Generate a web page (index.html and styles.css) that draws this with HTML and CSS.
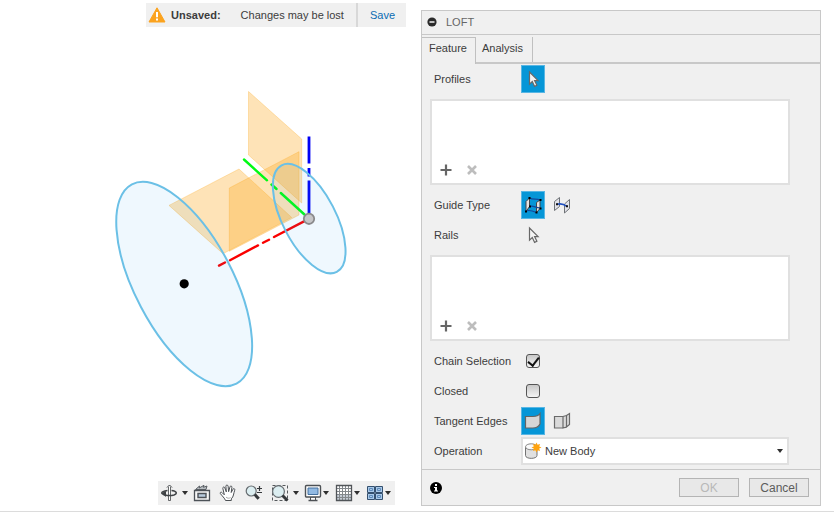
FILE: index.html
```html
<!DOCTYPE html>
<html lang="en">
<head>
<meta charset="utf-8">
<title>Loft</title>
<link rel="stylesheet" href="styles.css">
</head>
<body>
<main class="app">
  <section class="canvas" aria-label="Model view">
    <div class="notice" role="status">
      <svg class="notice-icon" width="18" height="16" viewBox="0 0 18 16" aria-hidden="true">
        <path d="M9 .8 17 15H1z" fill="#fba31f" stroke="#fba31f" stroke-linejoin="round"/>
        <path d="M9 5v5.200M9 11.500v2" stroke="#fff" stroke-width="2"/>
      </svg>
      <strong class="notice-title">Unsaved:</strong>
      <span class="notice-text">Changes may be lost</span>
      <a class="notice-save" href="#">Save</a>
    </div>

    <svg class="scene" viewBox="0 27 421 454" role="img" aria-label="Two circular profiles with construction planes and axes">
      <g class="plane">
        <path d="M248.500 91.500 301.700 139V203L248.500 155z"/>
        <path d="M229.300 188 299 151.700V215L229.300 251.300z"/>
        <path d="M169 205.400 239 169 291.700 217.500 223 253.700z"/>
      </g>
      <g stroke-width="2.400" fill="none" stroke-linecap="round">
        <path stroke="#0000f5" stroke-width="2.800" stroke-linecap="butt" d="M309 136.500V163.500M309 168V176.500M309 180.500V214"/>
        <path stroke="#00fa14" d="M244 159.500 267 180.300M271.500 184.500 276.500 189M280.800 193 305 215"/>
        <path stroke="#fa0000" d="M304 221.400 274 237M269 239.800 263 242.800M258 245.400 230 260.200M225 262.500 219 265.600"/>
      </g>
      <g class="profile">
        <ellipse cx="184.200" cy="284" rx="112.500" ry="49" transform="rotate(62.300 184.200 284)"/>
        <ellipse cx="309.200" cy="218.600" rx="60" ry="26.600" transform="rotate(62.600 309.200 218.600)"/>
      </g>
      <circle cx="184.200" cy="283.800" r="4.600"/>
      <circle cx="309" cy="218.800" r="5.200" fill="#c6c6c8" stroke="#89898b" stroke-width="1.800"/>
    </svg>

    <div class="toolbar" role="toolbar" aria-label="Navigation">
      <div class="tools">
        <button class="tool tool-loose" aria-label="Orbit">
          <svg width="18" height="18" viewBox="0 0 18 18" fill="none" stroke="#3f4245">
            <path d="M8.500 3v13.500h2V3" fill="#fff" stroke-width=".8"/>
            <path d="M7 3.500 9.500 1 12 3.500" stroke-width="1"/>
            <path d="M11.500 6.500c5 .5 6.500 3 2.500 4.500-4 1.200-10 .6-12-1.500C1 8 4 7 7.500 6.600" stroke-width="1.500"/>
            <path d="M6 7v6L1.500 9z" fill="#3f4245" stroke="none"/>
          </svg>
          <span class="caret"></span>
        </button>
        <button class="tool" aria-label="Look at">
          <svg width="18" height="18" viewBox="0 0 18 18" fill="none" stroke="#4d5258">
            <path d="M1.500 6.500h15v10h-15z" fill="#f7f7f7" stroke-width="1.300"/>
            <path d="M5 9.500h8v4H5z" fill="#b9cbdd" stroke-width="1.400"/>
            <path d="m2.500 5.500 4-3.500-.3 2 4.800-2.700-.6 2 3.600-1.300-1 3.500z" fill="#b8bdc1" stroke-width=".9"/>
          </svg>
        </button>
        <button class="tool" aria-label="Pan">
          <svg width="18" height="18" viewBox="0 0 18 18" fill="#fff" stroke="#4c5054" stroke-linejoin="round">
            <path d="M6.500 16.500c-.5-2-3.800-5-5.200-7-.5-1.500 1.300-1.700 2-.7l2 2L3.800 4.300c-.2-1.500 1.700-1.800 2-.4l1.500 4-.4-5.700c0-1.500 2-1.600 2.200 0l.5 5.500L11 2.800c.3-1.300 2.100-1 1.900.5l-.7 5.200 1.800-3.300c.8-1.200 2.200-.4 1.700 1-1.200 3.300-1 6.600-3.400 8.600v1.700z"/>
            <path d="M7 13c1 1.500 3.500 1.500 4.500.5" fill="none" stroke="#aaa"/>
          </svg>
        </button>
        <button class="tool" aria-label="Zoom">
          <svg width="18" height="18" viewBox="0 0 18 18" fill="none" stroke="#34383b">
            <circle cx="6.200" cy="7" r="5" fill="#dceef1" stroke="#666c70" stroke-width="1.200"/>
            <path d="m9.800 10.600 3.900 4.200" stroke-width="3"/>
            <path d="M12 4.500h5M14.500 2v5M12 8.500h5" stroke-width="1.200"/>
          </svg>
        </button>
      </div>
      <div class="tools">
        <button class="tool tool-loose" aria-label="Zoom window">
          <svg width="18" height="18" viewBox="0 0 18 18" fill="none" stroke="#34383b">
            <path d="M1.500 1.500h15v15h-15z" stroke="#55595c" stroke-dasharray="3 2"/>
            <circle cx="7.500" cy="7.500" r="5.900" fill="#dceef1" stroke="#666c70" stroke-width="1.200"/>
            <path d="m11.500 11.500 5 5" stroke-width="3"/>
          </svg>
          <span class="caret"></span>
        </button>
      </div>
      <div class="tools tools-tight">
        <button class="tool tool-drop" aria-label="Display settings">
          <svg width="18" height="18" viewBox="0 0 18 18" fill="#fff" stroke="#4d5155">
            <path d="M6.500 13h5v3.500h-5z"/><path d="M4.500 16.500h9" stroke-width="1.500"/>
            <rect x="1.500" y="1.500" width="15" height="11.500" rx="1" stroke-width="1.400"/>
            <path d="M4 4h10v6.500H4z" fill="#91b9e2" stroke="#45719f"/>
          </svg>
          <span class="caret"></span>
        </button>
        <button class="tool tool-drop" aria-label="Grid and snaps">
          <svg width="18" height="18" viewBox="0 0 18 18" fill="none" stroke="#83888c">
            <path d="M1.500 1.500h15v15h-15z" fill="#fff"/>
            <path d="M2 11h14v5H2z" fill="#c4ccd5" stroke="none"/>
            <path d="M4.500 1.500v15M7.500 1.500v15M10.500 1.500v15M13.500 1.500v15M1.500 4.500h15M1.500 7.500h15M1.500 10.500h15M1.500 13.500h15"/>
            <path d="M1.500 1.500h15v15h-15z" stroke="#505458" stroke-width="1.300"/>
          </svg>
          <span class="caret"></span>
        </button>
        <button class="tool tool-drop" aria-label="Viewports">
          <svg width="18" height="18" viewBox="0 0 18 18" fill="#a9c9e9" stroke="#34506f">
            <path d="M1.500 2.500h7v6h-7zM9.500 2.500h7v6h-7zM1.500 9.500h7v6h-7zM9.500 9.500h7v6h-7z"/>
            <path d="M3.500 4.500h3v2h-3zM11.500 4.500h3v2h-3zM3.500 11.500h3v2h-3zM11.500 11.500h3v2h-3z" stroke="#5e8bba"/>
          </svg>
          <span class="caret"></span>
        </button>
      </div>
    </div>
  </section>

  <form class="panel" aria-label="Loft">
    <header class="panel-head">
      <button class="collapse" type="button" aria-label="Collapse">
        <svg width="10" height="10" viewBox="0 0 10 10"><circle cx="5" cy="5" r="4.600" fill="#2b2b2b"/><path d="M2.500 5h5" stroke="#fff" stroke-width="1.400"/></svg>
      </button>
      <h1 class="panel-title">LOFT</h1>
    </header>
    <div class="tabs" role="tablist">
      <button class="tab tab-active" type="button" role="tab" aria-selected="true">Feature</button>
      <button class="tab" type="button" role="tab" aria-selected="false">Analysis</button>
    </div>

    <div class="fields">
      <div class="row">
        <span class="label">Profiles</span>
        <button class="pick pick-on" type="button" aria-label="Select profiles">
          <svg width="18" height="18" viewBox="0 0 18 18"><path d="M5.500 2v12.200l2.800-2.700 2.300 4.900 2.300-1.100-2.300-4.700h3.500z" fill="#f4f4f4" stroke="#686868" stroke-width="1.200"/></svg>
        </button>
      </div>
      <div class="list" aria-label="Selected profiles">
        <button class="list-button" type="button" aria-label="Add profile"><svg width="12" height="12" viewBox="0 0 12 12"><path d="M6 .5v11M.5 6h11" stroke="#666" stroke-width="2.200"/></svg></button>
        <button class="list-button" type="button" aria-label="Remove profile"><svg width="12" height="12" viewBox="0 0 12 12"><path d="m2 2 8 8m0-8-8 8" stroke="#bdbdbd" stroke-width="2.600"/></svg></button>
      </div>
      <div class="row">
        <span class="label">Guide Type</span>
        <button class="pick pick-on" type="button" aria-label="Rails">
          <svg width="18" height="18" viewBox="0 0 18 18" fill="#e4e4e4" stroke="#42464a">
            <path d="M2 15.500V5.500L5.500 2v8.500zM12.500 16.500v-10L16 4v8.500z"/>
            <path d="M5.500 2c3.500 2 7 .5 10.500 2M5.500 10.500c3.500-1.500 6 1.500 10.500 1.500M2 15c4-1.500 7 0 10.500 1.500" fill="none" stroke="#14479b" stroke-width="1.200"/>
            <path d="M4.500 1h2v2h-2zM15.500 3h2v2h-2zM5 9.500h2v2H5zM15.500 11.500h2v2h-2zM1 14.500h2v2H1zM11.500 15.500h2v2h-2z" fill="#000" stroke="none"/>
          </svg>
        </button>
        <button class="pick" type="button" aria-label="Centerline">
          <svg width="18" height="18" viewBox="0 0 18 18" fill="#e2e2e8" stroke="#6e7276">
            <path d="M1.500 14.500v-9l5-4v9zM11.500 17V8l5-4.500v9z"/>
            <path d="M4 8.200c3-.7 6.500-.5 9.500 2" fill="none" stroke="#1f4fc0" stroke-width="1.600"/>
            <path d="M3 7.200h2v2H3zM13 9.300h2v2h-2z" fill="#111" stroke="none"/>
          </svg>
        </button>
      </div>
      <div class="row">
        <span class="label">Rails</span>
        <button class="pick" type="button" aria-label="Select rails">
          <svg width="18" height="18" viewBox="0 0 18 18"><path d="M5.500 2v12.200l2.800-2.700 2.300 4.900 2.300-1.100-2.300-4.700h3.500z" fill="#f4f4f4" stroke="#686868" stroke-width="1.200"/></svg>
        </button>
      </div>
      <div class="list" aria-label="Selected rails">
        <button class="list-button" type="button" aria-label="Add rail"><svg width="12" height="12" viewBox="0 0 12 12"><path d="M6 .5v11M.5 6h11" stroke="#666" stroke-width="2.200"/></svg></button>
        <button class="list-button" type="button" aria-label="Remove rail"><svg width="12" height="12" viewBox="0 0 12 12"><path d="m2 2 8 8m0-8-8 8" stroke="#bdbdbd" stroke-width="2.600"/></svg></button>
      </div>
      <div class="row">
        <label class="label" for="chain">Chain Selection</label>
        <input class="check" id="chain" type="checkbox" checked>
      </div>
      <div class="row">
        <label class="label" for="closed">Closed</label>
        <input class="check" id="closed" type="checkbox">
      </div>
      <div class="row">
        <span class="label">Tangent Edges</span>
        <button class="pick pick-on" type="button" aria-label="Merge">
          <svg width="18" height="18" viewBox="0 0 18 18"><path d="M1.500 4.500H9c3.500 0 5.500-.8 7-3v10.500c-1.500 3-3.500 4-7 4H1.500z" fill="#d6d6d6" stroke="#646464" stroke-width="1.200"/></svg>
        </button>
        <button class="pick" type="button" aria-label="Keep">
          <svg width="18" height="18" viewBox="0 0 18 18" fill="#dadada" stroke="#6a6a6a" stroke-width="1.200"><path d="M1.500 4.500H10V16H1.500zM10 4.500l3.500-1V15L10 16zM13.500 3.500l3-2v11l-3 2.500z"/></svg>
        </button>
      </div>
      <div class="row">
        <label class="label" for="operation">Operation</label>
        <div class="combo">
          <select class="combo-select" id="operation"><option>New Body</option></select>
          <svg class="combo-icon" width="18" height="18" viewBox="0 0 18 18" aria-hidden="true">
            <path d="M1.500 5v8.500c0 3.800 11.500 3.800 11.500 0V5" fill="#e0e0e0" stroke="#737373"/>
            <ellipse cx="7.200" cy="4.800" rx="5.700" ry="3" fill="#fafafa" stroke="#8a8a8a"/>
            <path d="m12.500.5 1.100 2.300 2.500-.8-.9 2.400 2.300 1.100-2.300 1.100.8 2.400-2.400-.8-1.100 2.300-1.100-2.300-2.400.8.800-2.400-2.300-1.100 2.300-1.100L9 2l2.400.8z" fill="#ffa30f"/>
          </svg>
          <span class="caret combo-caret"></span>
        </div>
      </div>
    </div>

    <footer class="panel-foot">
      <button class="info" type="button" aria-label="Information">
        <svg width="12" height="12" viewBox="0 0 12 12"><circle cx="6" cy="6" r="6"/><path d="M5 2h2v2H5zM4 5h3v3.500h1v1H4v-1h1V6H4z" fill="#fff"/></svg>
      </button>
      <button class="action" type="button" disabled>OK</button>
      <button class="action" type="button">Cancel</button>
    </footer>
  </form>
</main>
</body>
</html>
```
FILE: styles.css
```css
* { box-sizing: border-box; }

body {
  margin: 0;
  background: #fff;
  color: #3c3c3c;
  font: 11px/14px "Liberation Sans", Arial, sans-serif;
}

button {
  margin: 0;
  padding: 0;
  border: 0;
  background: none;
  color: inherit;
  font: inherit;
}

svg { display: block; flex: none; }

.app {
  display: grid;
  grid-template-columns: minmax(0, 1fr) minmax(0, 400px);
  align-items: start;
  padding-right: 13px;
  padding-bottom: 5px;
  border-bottom: 1px solid #dcdcdc;
}

/* Model view */
.canvas {
  display: grid;
  justify-items: center;
  padding-top: 3px;
}

.notice,
.toolbar {
  display: flex;
  align-items: center;
  height: 24px;
  margin-left: 131px;
  background: #f0f0f0;
  white-space: nowrap;
}

.notice-icon { margin-left: 2px; }
.notice-title { margin-left: 5px; }
.notice-text { margin: 0 12px 0 20px; }

.notice-save {
  width: 50px;
  padding: 5px 0 5px 12px;
  border-left: 2px solid #d8d8d8;
  color: #0b6cb3;
  text-decoration: none;
}

.scene { width: 100%; height: auto; }

.plane {
  fill: #fba81e;
  fill-opacity: .32;
  stroke: #fba81e;
  stroke-opacity: .3;
}

.profile {
  fill: #38a8f0;
  fill-opacity: .08;
  stroke: #6bc0e6;
  stroke-width: 2px;
}

.toolbar { gap: 3px; padding-left: 1px; }
.tools { display: flex; }
.tools-tight { gap: 1px; }

.tool {
  display: flex;
  align-items: center;
  justify-content: center;
  width: 26px;
  height: 24px;
}

.tool-loose {
  justify-content: flex-start;
  gap: 4px;
  width: 30px;
  padding-left: 1px;
}

.tool-drop {
  justify-content: flex-start;
  gap: 1px;
  width: 30px;
  padding-left: 1px;
}

.caret {
  border: 3px solid transparent;
  border-top: 4px solid #2f2f2f;
  border-bottom: 0;
}

/* Command panel */
.panel {
  margin-top: 10px;
  border: 1px solid #c8c8c8;
  background: #f0f0f0;
}

.panel-head {
  display: flex;
  align-items: center;
  gap: 9px;
  height: 24px;
  padding-left: 5px;
  padding-bottom: 1px;
  border-bottom: 1px solid #c8c8c8;
}

.panel-title {
  margin: 0;
  color: #666;
  font-size: 11px;
  font-weight: normal;
}

.tabs {
  display: flex;
  height: 29px;
  padding-top: 2px;
  border-bottom: 2px solid #c8c8c8;
}

.tab {
  padding: 0 9px 3px 6px;
  border-right: 1px solid #c0c0c0;
}

.tab-active {
  margin-bottom: -2px;
  padding-right: 8px;
  padding-bottom: 6px;
  padding-left: 7px;
  border-top: 1px solid #c0c0c0;
  background: #f0f0f0;
}

.row {
  display: flex;
  align-items: center;
  gap: 5px;
  height: 30px;
  padding: 0 31px 0 12px;
}

.label { flex: none; width: 82px; white-space: nowrap; }

.pick {
  display: grid;
  place-items: center;
  width: 24px;
  height: 28px;
}

.pick-on {
  border: 1px solid #58b6e4;
  background: #0696d7;
}

.list {
  display: flex;
  align-items: flex-end;
  height: 86px;
  margin: 5px 30px 5px 8px;
  padding-left: 1px;
  border: 2px solid #e0e0e0;
  background: #fff;
}

.list-button {
  display: grid;
  place-items: center;
  width: 26px;
  height: 26px;
}

.check {
  appearance: none;
  display: grid;
  place-items: center;
  width: 14px;
  height: 14px;
  margin: 0 5px;
  border: 1px solid #555;
  border-radius: 3px;
  background: linear-gradient(#c8c8c8, #f4f4f4);
}

.check:checked::after {
  content: "";
  width: 5px;
  height: 9px;
  margin-bottom: 3px;
  border: solid #111;
  border-width: 0 2px 2px 0;
  transform: rotate(38deg);
}

.combo { position: relative; flex: 1; }

.combo-select {
  appearance: none;
  display: block;
  width: 100%;
  height: 28px;
  padding: 0 20px 0 22px;
  border: 2px solid #e0e0e0;
  border-radius: 0;
  background: #fff;
  color: inherit;
  font: inherit;
}

.combo-icon { position: absolute; left: 3px; top: 5px; }
.combo-caret { position: absolute; right: 6px; top: 12px; pointer-events: none; }

.panel-foot {
  display: flex;
  align-items: center;
  gap: 10px;
  height: 36px;
  margin-top: 3px;
  padding: 0 11px 0 8px;
  border-top: 1px solid #c8c8c8;
}

.info { margin-right: auto; }

.action {
  width: 60px;
  height: 19px;
  border: 1px solid #b4b4b4;
  background: #e8e8e8;
  color: #5c5c5c;
  font-size: 12px;
}

.action:disabled { color: #b8b8b8; }
```
